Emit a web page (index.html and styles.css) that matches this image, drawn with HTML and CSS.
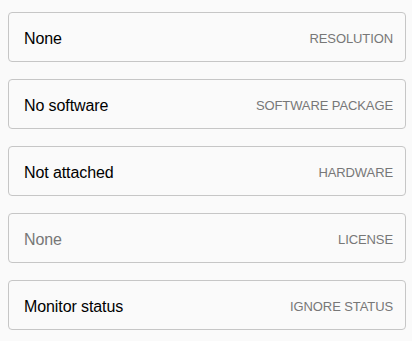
FILE: index.html
```html
<!DOCTYPE html>
<html>
  <head>
    <title>Device settings</title>
    <link rel="stylesheet" href="styles.css">
  </head>
  <body>
    <div class="fields">
      <div class="field">
        <span class="value">None</span>
        <span class="label">Resolution</span>
      </div>
      <div class="field">
        <span class="value">No software</span>
        <span class="label">Software package</span>
      </div>
      <div class="field">
        <span class="value">Not attached</span>
        <span class="label">Hardware</span>
      </div>
      <div class="field">
        <span class="value muted">None</span>
        <span class="label">License</span>
      </div>
      <div class="field">
        <span class="value">Monitor status</span>
        <span class="label">Ignore status</span>
      </div>
    </div>
  </body>
</html>
```

FILE: styles.css
```css
body { margin: 0; background: #fafafa; font-family: "Liberation Sans", Arial, sans-serif; }

.fields { display: flex; flex-direction: column; gap: 17px; padding: 12px 6px 0 8px; }

.field { display: flex; align-items: center; justify-content: space-between; height: 50px; box-sizing: border-box; padding: 3px 12px 0 15px; border: 1px solid #c6c6c6; border-radius: 4px; background: #fafafa; }

.value { font-size: 16px; color: #000; letter-spacing: -0.1px; }
.value.muted { color: #777; }

.label { font-size: 13px; color: #777; text-transform: uppercase; letter-spacing: -0.1px; }
```
